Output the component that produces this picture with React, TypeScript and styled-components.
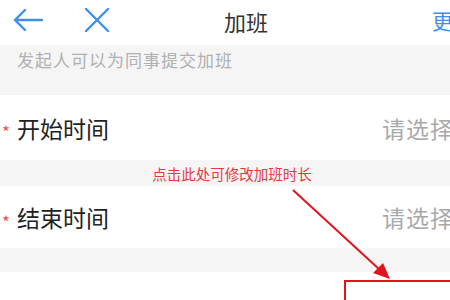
import React from 'react';
import styled, { createGlobalStyle } from 'styled-components';

const GlobalStyle = createGlobalStyle`
  html, body {
    margin: 0;
    padding: 0;
    background: #ffffff;
    overflow: hidden;
  }
  body {
    font-family: "Noto Sans CJK SC", "Noto Sans", sans-serif;
  }
`;

const Page = styled.div`
  position: relative;
  width: 450px;
  height: 300px;
  overflow: hidden;
  background: #fff;
`;

const Header = styled.div`
  display: flex;
  align-items: center;
  height: 45px;
  padding-bottom: 4px;
  box-sizing: border-box;
`;

const NavIcons = styled.div`
  display: flex;
  align-items: center;
  gap: 41px;
  padding-left: 13px;
`;

const Title = styled.div`
  margin-left: 114px;
  font-size: 22px;
  color: #333;
  flex: 1;
  line-height: 1;
`;

const More = styled.div`
  font-size: 21px;
  color: #3d8ef0;
  white-space: nowrap;
  width: 18px;
  overflow: visible;
  line-height: 1;
`;

const Band = styled.div<{ $h: number }>`
  height: ${(p) => p.$h}px;
  background: #f5f5f5;
  display: flex;
  align-items: center;
  box-sizing: border-box;
`;

const Notice = styled.div`
  font-size: 17px;
  color: #b0b0b0;
  padding-left: 17px;
  margin-top: -22px;
  letter-spacing: 1px;
`;

const Hint = styled.div`
  width: 100%;
  text-align: center;
  font-size: 14.5px;
  color: #e8383d;
  padding-left: 14px;
  box-sizing: border-box;
`;

const Row = styled.div<{ $h: number }>`
  height: ${(p) => p.$h}px;
  display: flex;
  align-items: center;
  background: #fff;
  white-space: nowrap;
`;

const Star = styled.span`
  width: 17px;
  padding-left: 2px;
  box-sizing: border-box;
  color: #e85a4f;
  font-size: 17px;
  margin-top: 8px;
`;

const Label = styled.span<{ $faint?: boolean }>`
  font-size: 23px;
  color: ${(p) => (p.$faint ? '#666' : '#222')};
  margin-top: ${(p) => (p.$faint ? '6px' : '0')};
`;

const Placeholder = styled.span<{ $low?: boolean }>`
  margin-left: auto;
  margin-right: -4px;
  font-size: 23px;
  color: #a9a9a9;
  letter-spacing: 1px;
  margin-top: ${(p) => (p.$low ? '6px' : '0')};
`;

const Annotation = styled.svg`
  position: absolute;
  left: 0;
  top: 0;
  pointer-events: none;
`;

const MarkBox = styled.div`
  position: absolute;
  left: 344px;
  top: 280px;
  width: 120px;
  height: 40px;
  border: 2px solid #e0141e;
  box-sizing: border-box;
`;

export default function App() {
  return (
    <Page>
      <GlobalStyle />
      <Header>
        <NavIcons>
          <svg width="30" height="26" viewBox="0 0 30 26">
            <path
              d="M2 12 H29 M12 2 L2 12 L12 22"
              fill="none"
              stroke="#3d8ef0"
              strokeWidth="2.4"
              strokeLinecap="round"
              strokeLinejoin="round"
            />
          </svg>
          <svg width="26" height="26" viewBox="0 0 26 26">
            <path
              d="M2 1 L24 23 M24 1 L2 23"
              fill="none"
              stroke="#3d8ef0"
              strokeWidth="2.4"
              strokeLinecap="round"
            />
          </svg>
        </NavIcons>
        <Title>加班</Title>
        <More>更多</More>
      </Header>
      <Band $h={50}>
        <Notice>发起人可以为同事提交加班</Notice>
      </Band>
      <Row $h={65}>
        <Star>*</Star>
        <Label>开始时间</Label>
        <Placeholder>请选择</Placeholder>
      </Row>
      <Band $h={26}>
        <Hint>点击此处可修改加班时长</Hint>
      </Band>
      <Row $h={62}>
        <Star>*</Star>
        <Label>结束时间</Label>
        <Placeholder>请选择</Placeholder>
      </Row>
      <Band $h={24} />
      <Row $h={70}>
        <Star />
        <Label $faint>加班时长</Label>
        <Placeholder $low>请选择</Placeholder>
      </Row>
      <MarkBox />
      <Annotation width="450" height="300" viewBox="0 0 450 300">
        <line x1="293" y1="190" x2="380" y2="270" stroke="#e0141e" strokeWidth="2" />
        <polygon points="390,279 373,273 383,263" fill="#e0141e" />
      </Annotation>
    </Page>
  );
}
